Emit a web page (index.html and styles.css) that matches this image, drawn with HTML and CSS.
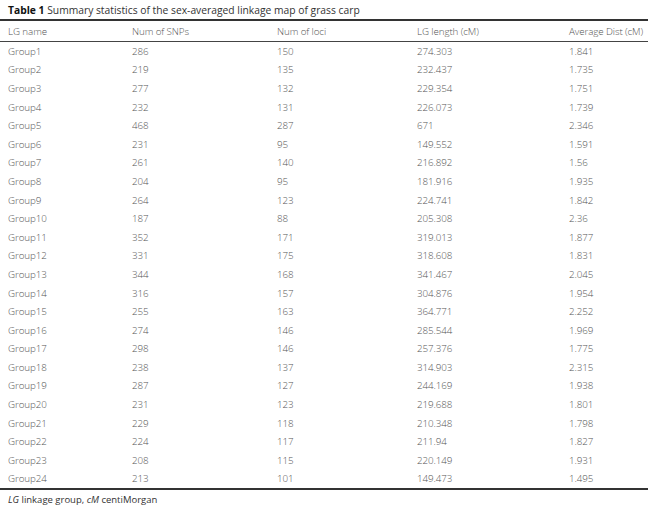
FILE: index.html
```html
<!DOCTYPE html>
<html>
<head>
<meta charset="utf-8">
<link rel="stylesheet" href="styles.css">
</head>
<body>
<div class="wrap">
  <div class="caption"><b>Table 1</b> Summary statistics of the sex-averaged linkage map of grass carp</div>
  <table class="tbl">
    <thead>
      <tr><th class="c1">LG name</th><th class="c2">Num of SNPs</th><th class="c3">Num of loci</th><th class="c4">LG length (cM)</th><th class="c5">Average Dist (cM)</th></tr>
    </thead>
    <tbody>
      <tr><td>Group1</td><td>286</td><td>150</td><td>274.303</td><td>1.841</td></tr>
      <tr><td>Group2</td><td>219</td><td>135</td><td>232.437</td><td>1.735</td></tr>
      <tr><td>Group3</td><td>277</td><td>132</td><td>229.354</td><td>1.751</td></tr>
      <tr><td>Group4</td><td>232</td><td>131</td><td>226.073</td><td>1.739</td></tr>
      <tr><td>Group5</td><td>468</td><td>287</td><td>671</td><td>2.346</td></tr>
      <tr><td>Group6</td><td>231</td><td>95</td><td>149.552</td><td>1.591</td></tr>
      <tr><td>Group7</td><td>261</td><td>140</td><td>216.892</td><td>1.56</td></tr>
      <tr><td>Group8</td><td>204</td><td>95</td><td>181.916</td><td>1.935</td></tr>
      <tr><td>Group9</td><td>264</td><td>123</td><td>224.741</td><td>1.842</td></tr>
      <tr><td>Group10</td><td>187</td><td>88</td><td>205.308</td><td>2.36</td></tr>
      <tr><td>Group11</td><td>352</td><td>171</td><td>319.013</td><td>1.877</td></tr>
      <tr><td>Group12</td><td>331</td><td>175</td><td>318.608</td><td>1.831</td></tr>
      <tr><td>Group13</td><td>344</td><td>168</td><td>341.467</td><td>2.045</td></tr>
      <tr><td>Group14</td><td>316</td><td>157</td><td>304.876</td><td>1.954</td></tr>
      <tr><td>Group15</td><td>255</td><td>163</td><td>364.771</td><td>2.252</td></tr>
      <tr><td>Group16</td><td>274</td><td>146</td><td>285.544</td><td>1.969</td></tr>
      <tr><td>Group17</td><td>298</td><td>146</td><td>257.376</td><td>1.775</td></tr>
      <tr><td>Group18</td><td>238</td><td>137</td><td>314.903</td><td>2.315</td></tr>
      <tr><td>Group19</td><td>287</td><td>127</td><td>244.169</td><td>1.938</td></tr>
      <tr><td>Group20</td><td>231</td><td>123</td><td>219.688</td><td>1.801</td></tr>
      <tr><td>Group21</td><td>229</td><td>118</td><td>210.348</td><td>1.798</td></tr>
      <tr><td>Group22</td><td>224</td><td>117</td><td>211.94</td><td>1.827</td></tr>
      <tr><td>Group23</td><td>208</td><td>115</td><td>220.149</td><td>1.931</td></tr>
      <tr><td>Group24</td><td>213</td><td>101</td><td>149.473</td><td>1.495</td></tr>
    </tbody>
  </table>
  <div class="foot"><i>LG</i> linkage group, <i>cM</i> centiMorgan</div>
</div>
</body>
</html>
```
FILE: styles.css
```css
html, body {
  margin: 0;
  padding: 0;
  background: #ffffff;
}
body {
  font-family: "Open Sans", "Liberation Sans", sans-serif;
  font-weight: 300;
  color: #555555;
  font-size: 9.8px;
}
.wrap {
  width: 648px;
  padding-top: 3px;
}
.caption {
  color: #333;
  font-size: 10.3px;
  line-height: 15px;
  padding-left: 8px;
  font-weight: 400;
  height: 16px;
}
.caption b {
  font-weight: 700;
  color: #111;
}
.tbl {
  width: 648px;
  border-collapse: collapse;
  table-layout: fixed;
  border-top: 2px solid #333;
  border-bottom: 2px solid #333;
}
.tbl th, .tbl td {
  text-align: left;
  font-weight: 300;
  padding: 0 0 0 8px;
  white-space: nowrap;
  letter-spacing: -0.1px;
}
.tbl th {
  height: 20px;
  border-bottom: 1px solid #444;
}
.tbl td {
  height: 18.6px;
}
.c1 { width: 116px; }
.c2 { width: 137px; }
.c3 { width: 132px; }
.c4 { width: 144px; }
.c5 { width: auto; }
.foot {
  padding-left: 8px;
  padding-top: 3px;
  font-size: 9.5px;
  color: #333;
  font-weight: 400;
}
.foot i {
  font-style: italic;
}
```
